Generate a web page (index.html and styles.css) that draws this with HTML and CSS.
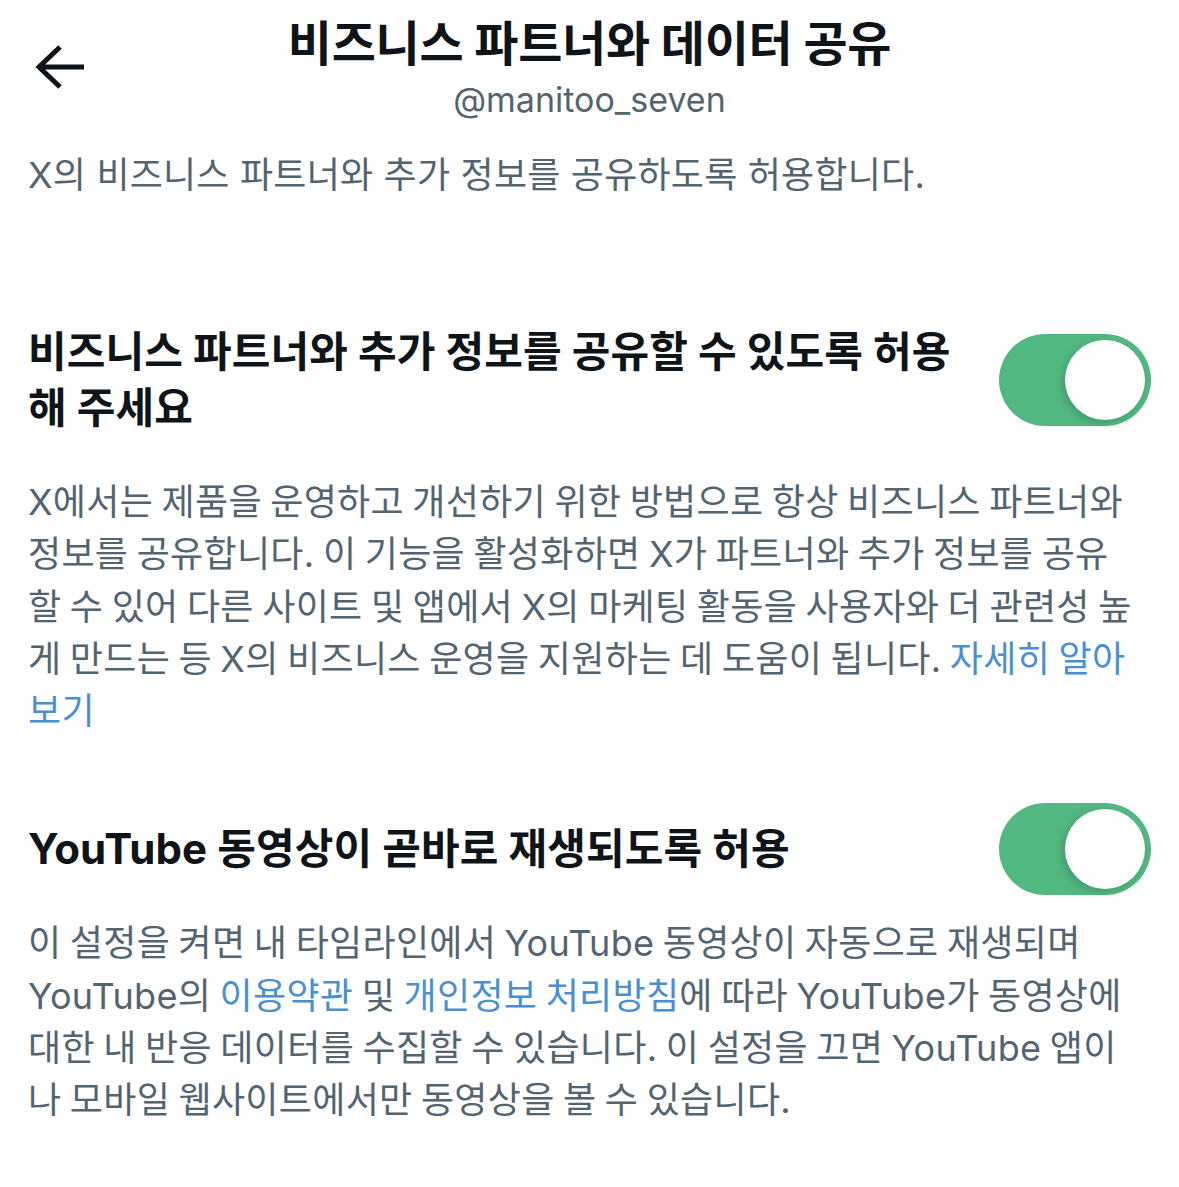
FILE: index.html
```html
<!DOCTYPE html>
<html lang="ko">
<head>
<meta charset="utf-8">
<title>비즈니스 파트너와 데이터 공유</title>
<link rel="stylesheet" href="styles.css">
</head>
<body>
<div class="page">
  <header class="top">
    <div class="back-cell">
      <svg class="back" viewBox="0 0 50 44" width="50" height="44" aria-hidden="true">
        <path d="M49 22 H4 M25 2 L4 22 L25 42" fill="none" stroke="#0f1419" stroke-width="5"/>
      </svg>
    </div>
    <div class="titles">
      <h1 class="title">비즈니스 파트너와 데이터 공유</h1>
      <div class="handle">@manitoo_seven</div>
    </div>
    <div></div>
  </header>

  <p class="intro">X의 비즈니스 파트너와 추가 정보를 공유하도록 허용합니다.</p>

  <section class="setting first">
    <div class="row">
      <h2 class="label">비즈니스 파트너와 추가 정보를 공유할 수 있도록 허용 해 주세요</h2>
      <span class="switch"><span class="knob"></span></span>
    </div>
    <p class="desc">X에서는 제품을 운영하고 개선하기 위한 방법으로 항상 비즈니스 파트너와 정보를 공유합니다. 이 기능을 활성화하면 X가 파트너와 추가 정보를 공유할 수 있어 다른 사이트 및 앱에서 X의 마케팅 활동을 사용자와 더 관련성 높게 만드는 등 X의 비즈니스 운영을 지원하는 데 도움이 됩니다. <a class="link" href="#">자세히 알아보기</a></p>
  </section>

  <section class="setting second">
    <div class="row">
      <h2 class="label">YouTube 동영상이 곧바로 재생되도록 허용</h2>
      <span class="switch"><span class="knob"></span></span>
    </div>
    <p class="desc">이 설정을 켜면 내 타임라인에서 YouTube 동영상이 자동으로 재생되며 YouTube의 <a class="link" href="#">이용약관</a> 및 <a class="link" href="#">개인정보 처리방침</a>에 따라 YouTube가 동영상에 대한 내 반응 데이터를 수집할 수 있습니다. 이 설정을 끄면 YouTube 앱이나 모바일 웹사이트에서만 동영상을 볼 수 있습니다.</p>
  </section>
</div>
</body>
</html>
```

FILE: styles.css
```css
html, body {
  margin: 0;
  padding: 0;
  background: #ffffff;
}

body {
  font-family: Inter, "Noto Sans CJK KR", sans-serif;
  color: #0f1419;
}

.page {
  padding: 16px 28px 40px 28px;
}

.top {
  display: grid;
  grid-template-columns: 1fr auto 1fr;
  align-items: start;
}

.back-cell {
  padding-top: 29px;
  padding-left: 7px;
}

.back {
  display: block;
}

.titles {
  display: flex;
  flex-direction: column;
  align-items: center;
  gap: 8px;
}

.title {
  margin: 0;
  font-size: 48px;
  line-height: 56px;
  font-weight: 700;
  letter-spacing: -0.3px;
  white-space: nowrap;
}

.handle {
  font-size: 34px;
  line-height: 40px;
  color: #536471;
}

.intro {
  margin: 29px 0 0 0;
  font-size: 36px;
  line-height: 52px;
  letter-spacing: 0.2px;
  color: #536471;
}

.setting.first {
  margin-top: 123px;
}

.setting.second {
  margin-top: 66px;
}

.row {
  display: flex;
  align-items: center;
  justify-content: space-between;
  gap: 30px;
}

.label {
  margin: 0;
  flex: 1;
  font-size: 42px;
  line-height: 56px;
  font-weight: 700;
  letter-spacing: 0.1px;
  color: #0f1419;
}

.switch {
  flex: none;
  position: relative;
  width: 152px;
  height: 92px;
  border-radius: 46px;
  background: #52b882;
}

.knob {
  position: absolute;
  top: 6px;
  right: 6px;
  width: 80px;
  height: 80px;
  border-radius: 50%;
  background: #ffffff;
  box-shadow: -3px 3px 8px rgba(0, 0, 0, 0.16);
}

.desc {
  margin: 40px 0 0 0;
  padding-right: 13px;
  font-size: 36px;
  line-height: 52.3px;
  letter-spacing: 0.3px;
  word-spacing: -2px;
  color: #536471;
}

.setting.second .desc {
  margin-top: 22px;
}

.link {
  color: #4a90d0;
  text-decoration: none;
}
```
